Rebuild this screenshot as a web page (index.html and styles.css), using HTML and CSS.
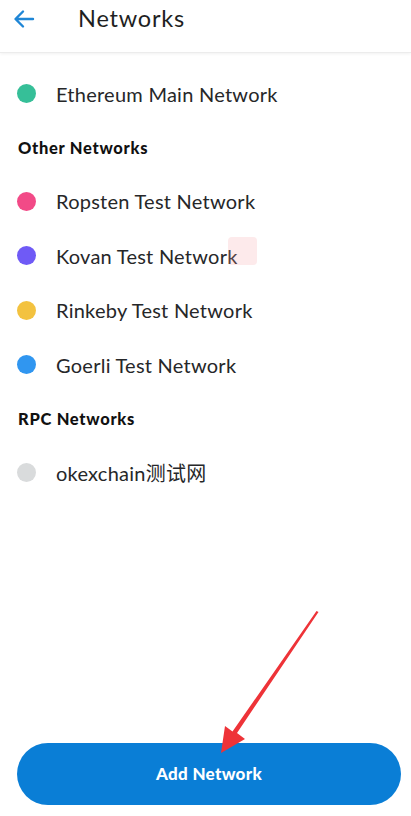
FILE: index.html
```html
<!DOCTYPE html>
<html>
<head>
<meta charset="utf-8">
<link rel="stylesheet" href="styles.css">
</head>
<body>
<div class="app">
  <header class="header">
    <svg class="back" width="22" height="20" viewBox="0 0 22 20">
      <path d="M20 10H3M10 2.5L2.5 10L10 17.5" fill="none" stroke="#1f86d6" stroke-width="2.4" stroke-linecap="round" stroke-linejoin="round"/>
    </svg>
    <h1 class="title">Networks</h1>
  </header>
  <main class="list">
    <div class="row"><span class="dot green"></span><span class="name">Ethereum Main Network</span></div>
    <div class="section">Other Networks</div>
    <div class="row"><span class="dot pink"></span><span class="name">Ropsten Test Network</span></div>
    <div class="row"><span class="dot purple"></span><span class="name">Kovan Test Network</span></div>
    <div class="row"><span class="dot yellow"></span><span class="name">Rinkeby Test Network</span></div>
    <div class="row"><span class="dot blue"></span><span class="name">Goerli Test Network</span></div>
    <div class="section">RPC Networks</div>
    <div class="row"><span class="dot grey"></span><span class="name">okexchain测试网</span></div>
  </main>
  <footer class="footer">
    <button class="add">Add Network</button>
  </footer>
  <div class="ghost"></div>
  <svg class="pointer" width="411" height="816" viewBox="0 0 411 816">
    <path d="M318.5 612 L237 733 L245 739 L221 753 L225 726 L232.5 731.5 L316.5 611 Z" fill="#ee3338"/>
  </svg>
</div>
</body>
</html>
```
FILE: styles.css
```css
* { box-sizing: border-box; }
html, body { margin: 0; padding: 0; background: #fff; }
body { font-family: "Lato", "Noto Sans CJK SC", sans-serif; color: #24272a; }
.app { position: relative; width: 411px; height: 816px; display: flex; flex-direction: column; overflow: hidden; }
.header { height: 53px; display: flex; align-items: center; padding-left: 13px; border-bottom: 1px solid #ececec; box-shadow: 0 1px 3px rgba(0,0,0,0.06); flex: none; }
.back { display: block; margin-top: -15px; }
.title { margin: -16px 0 0 43px; font-size: 23.5px; font-weight: 400; color: #1e1f22; letter-spacing: 0.8px; }
.list { flex: 1; padding-top: 13.5px; }
.row { height: 54.5px; display: flex; align-items: center; padding-left: 17px; }
.dot { width: 19px; height: 19px; border-radius: 50%; flex: none; }
.green { background: #36bf98; }
.pink { background: #f24a87; }
.purple { background: #6f5af6; }
.yellow { background: #f3c23f; }
.blue { background: #3096f0; }
.grey { background: #d9dbdc; }
.name { margin-left: 20px; font-size: 20px; color: #262729; letter-spacing: 0.25px; }
.section { height: 53px; display: flex; align-items: center; padding-left: 18px; font-size: 16.5px; font-weight: 900; color: #111; letter-spacing: 0.7px; }
.footer { flex: none; padding: 0 10px 11px 17px; }
.add { width: 100%; height: 62px; border: none; border-radius: 31px; background: #0a7ed6; color: #fff; font-family: "Lato", sans-serif; font-size: 17px; font-weight: 900; letter-spacing: 0.3px; padding-bottom: 2px; }
.ghost { position: absolute; left: 228px; top: 237px; width: 29px; height: 28px; border-radius: 4px; background: rgba(245, 160, 165, 0.22); }
.pointer { position: absolute; left: 0; top: 0; pointer-events: none; }
```
